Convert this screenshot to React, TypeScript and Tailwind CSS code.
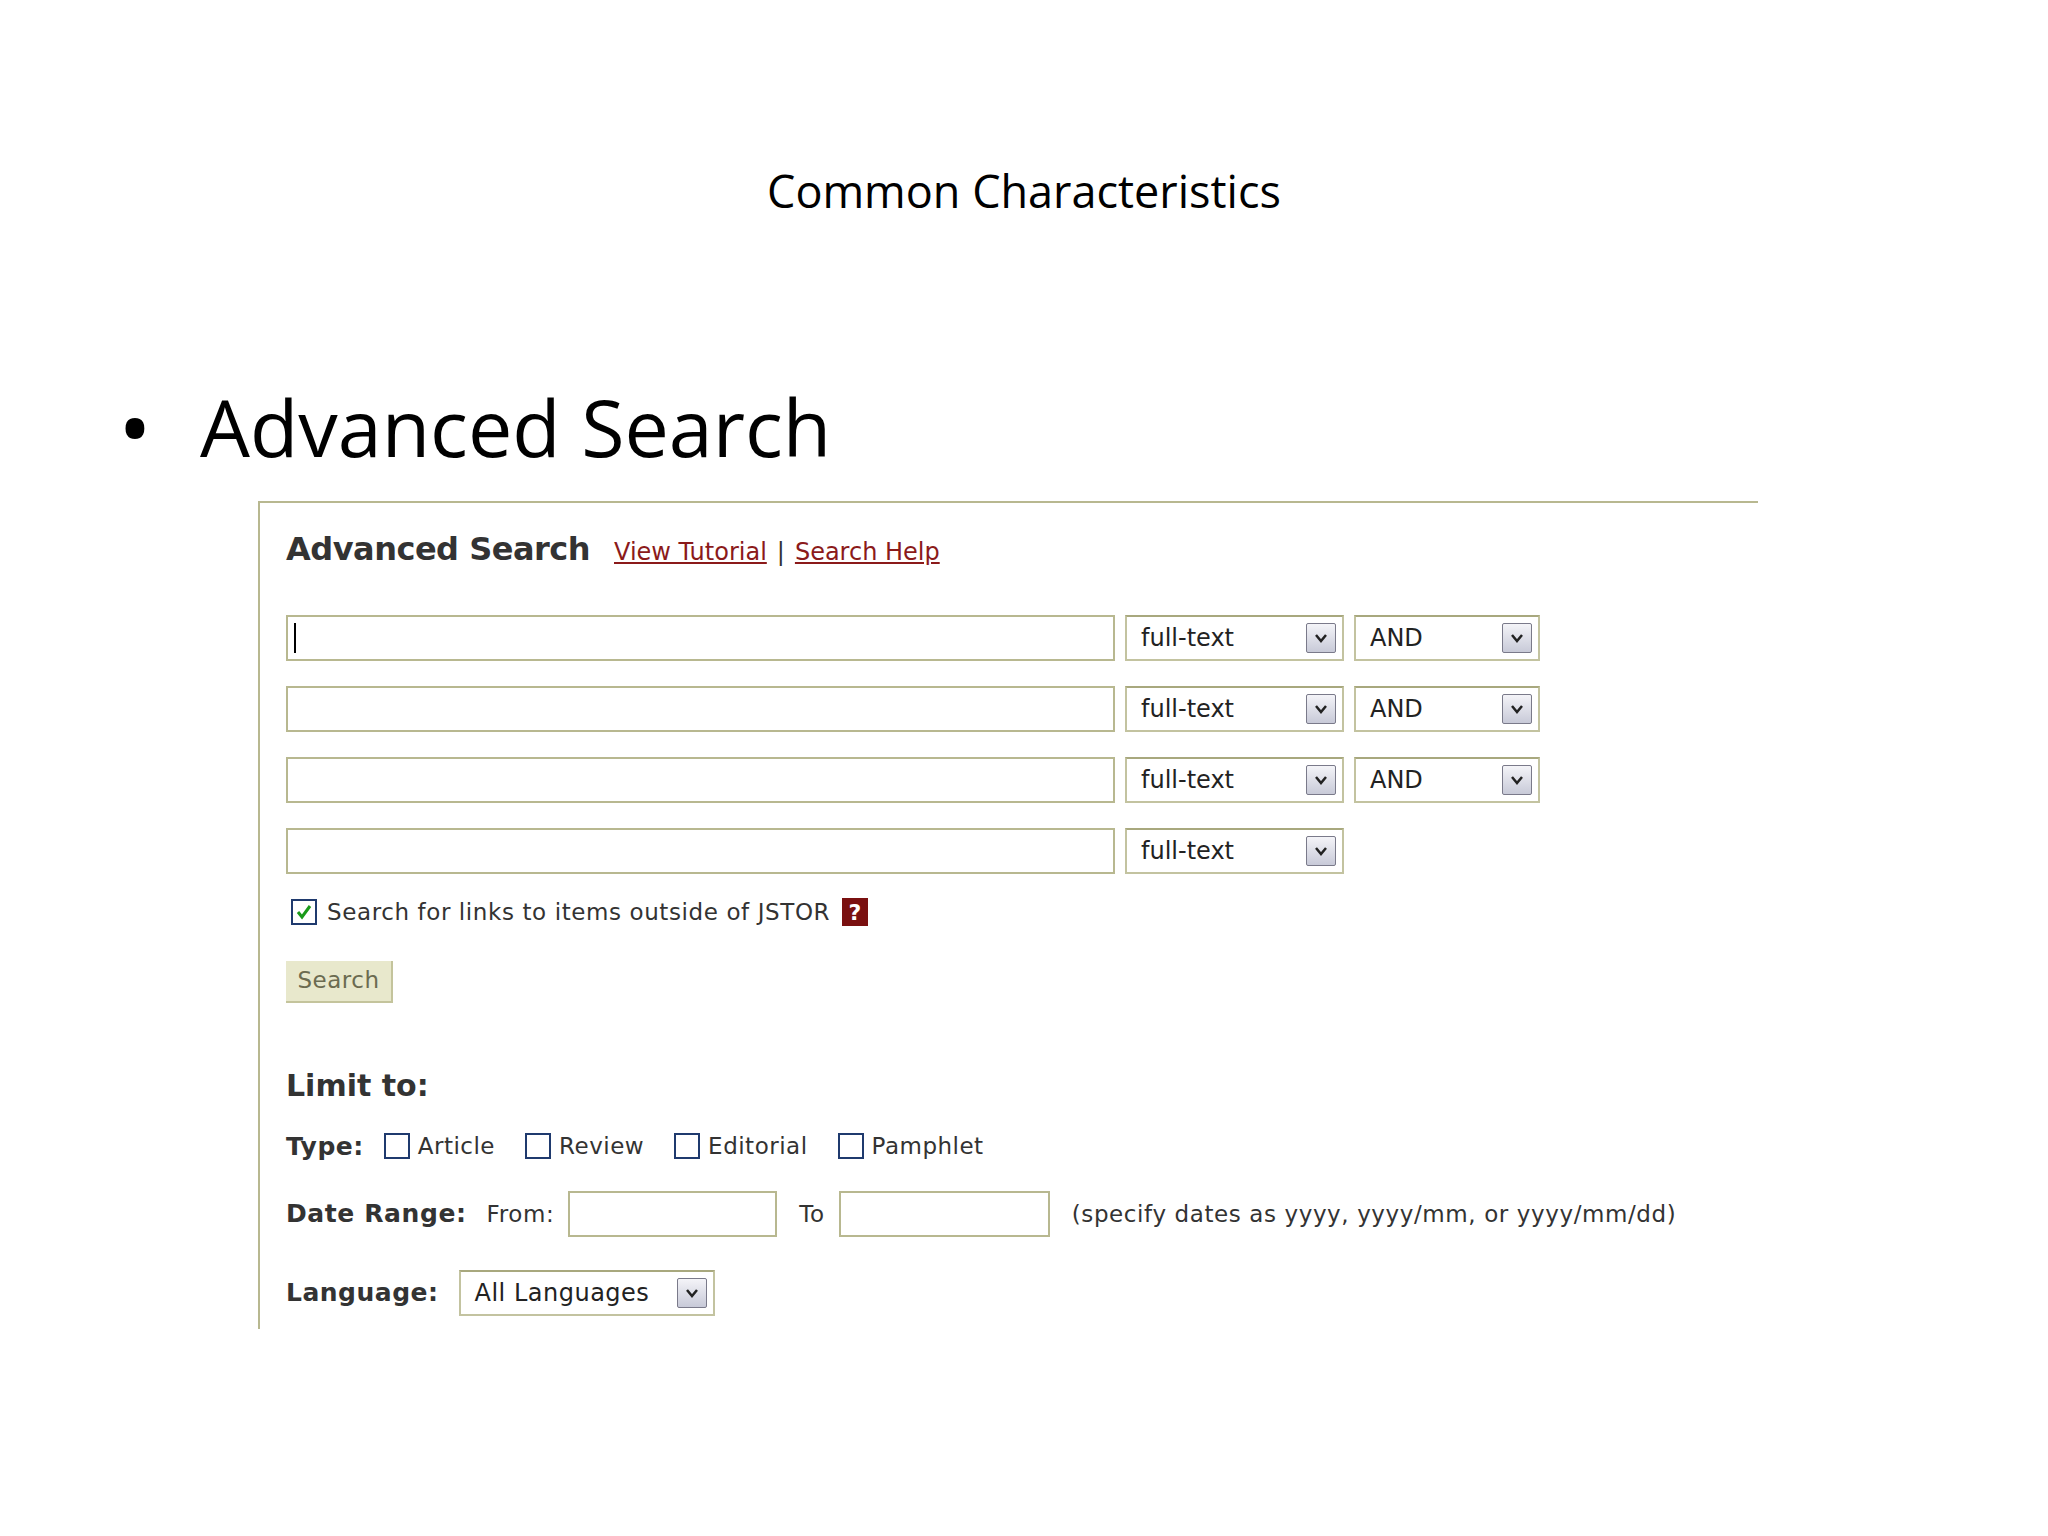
import React from "react";

const V = { fontFamily: '"DejaVu Sans", Verdana, sans-serif' };

function Arrow() {
  return (
    <div className="w-[30px] h-[30px] border border-[#7a7a8a] bg-gradient-to-b from-[#f4f4f8] to-[#c8cad8] flex items-center justify-center rounded-[2px]">
      <svg width="14" height="10" viewBox="0 0 14 10"><path d="M2 2 L7 8 L12 2" stroke="#222" strokeWidth="2.5" fill="none" /></svg>
    </div>
  );
}

function Select({ label, w }: { label: string; w: string }) {
  return (
    <div className={`${w} h-[46px] border-2 border-[#c3c3a0] border-t-[#a8a87e] bg-white flex items-center justify-between pl-[14px] pr-[6px] text-[24px] text-[#222]`}>
      <span>{label}</span>
      <Arrow />
    </div>
  );
}

function Box() {
  return <div className="w-[26px] h-[26px] border-2 border-[#1f3a6e] bg-white" />;
}

export default function App() {
  return (
    <div className="w-[2048px] h-[1536px] bg-white relative" style={{ fontFamily: '"Open Sans", sans-serif' }}>
      <div className="pt-[168px] text-center text-[45px] text-black leading-none">Common Characteristics</div>
      <div className="flex items-center mt-[168px] ml-[118px] text-[79px] leading-none text-black">
        <span className="text-[90px] w-[82px]">•</span>
        <span>Advanced Search</span>
      </div>
      <div className="ml-[258px] mt-[30px] w-[1500px] h-[828px] border-l-2 border-t-2 border-[#b8b890] pl-[26px] text-[#333]" style={V}>
        <div className="flex items-baseline mt-[22px] h-[50px]">
          <span className="font-bold text-[32px] text-[#333] tracking-[-0.5px]">Advanced Search</span>
          <span className="ml-[24px] text-[24px] text-[#8b1a1a] underline">View Tutorial</span>
          <span className="mx-[10px] text-[24px] text-[#333]">|</span>
          <span className="text-[24px] text-[#8b1a1a] underline">Search Help</span>
        </div>
        <div className="mt-[40px] flex flex-col gap-[25px]">
          {[0, 1, 2, 3].map((i) => (
            <div key={i} className="flex items-center h-[46px]">
              <div className="w-[829px] h-[46px] border-2 border-[#b8b890] bg-white flex items-center pl-[6px]">
                {i === 0 && <div className="w-[2px] h-[30px] bg-black" />}
              </div>
              <div className="ml-[10px]"><Select label="full-text" w="w-[219px]" /></div>
              {i < 3 && <div className="ml-[10px]"><Select label="AND" w="w-[186px]" /></div>}
            </div>
          ))}
        </div>
        <div className="flex items-center mt-[21px] ml-[5px] text-[23px] text-[#333] tracking-[0.6px]">
          <div className="w-[26px] h-[26px] border-2 border-[#1f3a6e] bg-white flex items-center justify-center">
            <svg width="18" height="18" viewBox="0 0 18 18"><path d="M3 9 L7 14 L15 3" stroke="#1a9a1a" strokeWidth="3" fill="none" /></svg>
          </div>
          <span className="ml-[10px]">Search for links to items outside of JSTOR</span>
          <span className="ml-[12px] w-[26px] h-[28px] bg-[#7a1010] text-white font-bold text-[22px] flex items-center justify-center">?</span>
        </div>
        <div className="mt-[31px] w-[107px] h-[42px] bg-[#e8e8cc] border-b-2 border-r-2 border-[#c4c49c] flex items-center justify-center text-[23px] text-[#6b6b50] tracking-[0.5px]">Search</div>
        <div className="mt-[60px] font-bold text-[30px] text-[#333]">Limit to:</div>
        <div className="mt-[20px] flex items-center text-[23px] text-[#333] tracking-[0.5px]">
          <span className="font-bold text-[25px] mr-[20px]">Type:</span>
          <Box /><span className="ml-[8px] mr-[30px]">Article</span>
          <Box /><span className="ml-[8px] mr-[30px]">Review</span>
          <Box /><span className="ml-[8px] mr-[30px]">Editorial</span>
          <Box /><span className="ml-[8px]">Pamphlet</span>
        </div>
        <div className="mt-[26px] flex items-center text-[23px] text-[#333] tracking-[0.6px]">
          <span className="font-bold text-[25px] mr-[20px]">Date Range:</span>
          <span>From:</span>
          <div className="ml-[14px] w-[209px] h-[46px] border-2 border-[#b8b890]" />
          <span className="ml-[22px]">To</span>
          <div className="ml-[14px] w-[211px] h-[46px] border-2 border-[#b8b890]" />
          <span className="ml-[22px]">(specify dates as yyyy, yyyy/mm, or yyyy/mm/dd)</span>
        </div>
        <div className="mt-[33px] flex items-center text-[23px] text-[#333] tracking-[0.5px]">
          <span className="font-bold text-[25px] mr-[20px]">Language:</span>
          <Select label="All Languages" w="w-[256px]" />
        </div>
      </div>
    </div>
  );
}
